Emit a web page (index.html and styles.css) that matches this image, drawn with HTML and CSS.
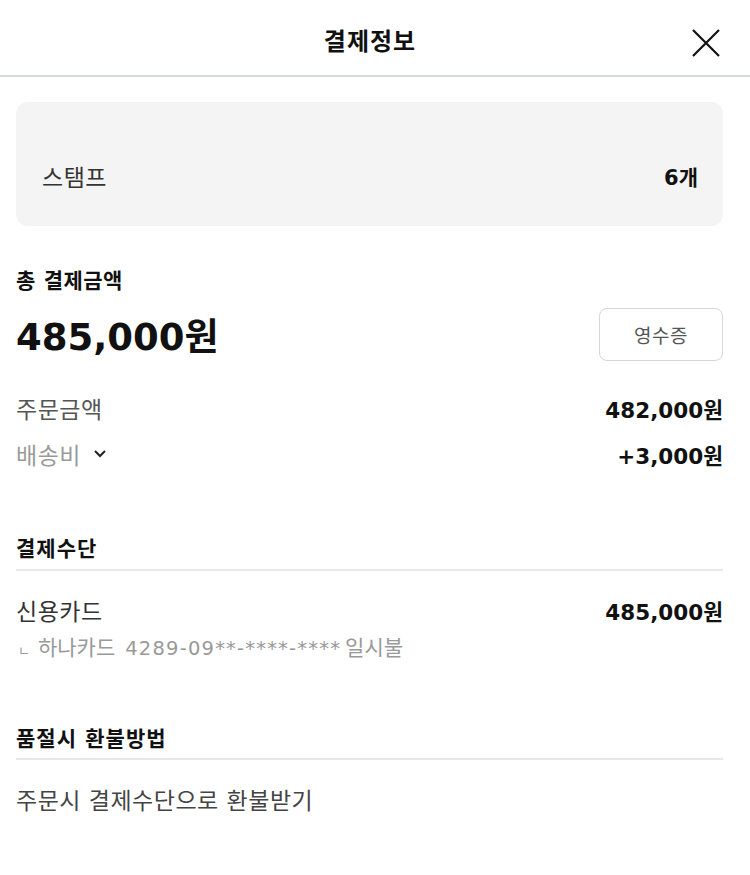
FILE: index.html
```html
<!DOCTYPE html>
<html lang="ko">
<head>
<meta charset="UTF-8" />
<meta name="viewport" content="width=device-width, initial-scale=1.0"/>
<title>결제정보</title>
<link rel="stylesheet" href="styles.css">
</head>
<body>
<header class="top-bar">
  <h1>결제정보</h1>
  <button class="close-btn" aria-label="닫기">
    <svg width="28" height="28" viewBox="0 0 28 28">
      <path d="M1 1 L27 27 M27 1 L1 27" stroke="#111" stroke-width="2.2" fill="none"/>
    </svg>
  </button>
</header>
<main>
  <div class="stamp-box">
    <span class="stamp-label">스탬프</span>
    <span class="stamp-count">6개</span>
  </div>

  <section class="total">
    <div class="section-title">총 결제금액</div>
    <div class="total-row">
      <div class="total-amount">485,000원</div>
      <button class="receipt-btn">영수증</button>
    </div>
    <div class="line-row first">
      <span class="label">주문금액</span>
      <span class="value">482,000원</span>
    </div>
    <div class="line-row">
      <span class="label muted">배송비
        <svg class="chevron" width="14" height="10" viewBox="0 0 14 10">
          <path d="M2 2 L7 7 L12 2" stroke="#222" stroke-width="2" fill="none"/>
        </svg>
      </span>
      <span class="value">+3,000원</span>
    </div>
  </section>

  <section class="block">
    <div class="block-title">결제수단</div>
    <div class="line-row">
      <span class="label dark">신용카드</span>
      <span class="value">485,000원</span>
    </div>
    <div class="card-info"><span class="corner">ㄴ</span>하나카드<span class="card-num">4289-09**-****-****</span>일시불</div>
  </section>

  <section class="block refund-block">
    <div class="block-title">품절시 환불방법</div>
    <div class="refund">주문시 결제수단으로 환불받기</div>
  </section>
</main>
</body>
</html>
```

FILE: styles.css
```css
body {
  margin: 0;
  font-family: "DejaVu Sans", "Noto Sans CJK KR", sans-serif;
  color: #111;
  background: #fff;
}

.top-bar {
  position: relative;
  height: 77px;
  box-sizing: border-box;
  padding-top: 4px;
  display: flex;
  align-items: center;
  justify-content: center;
  border-bottom: 2px solid #d5d8dc;
}

.top-bar h1 {
  margin: 0 10px 0 0;
  font-size: 24px;
  font-weight: bold;
  letter-spacing: 1px;
}

.close-btn {
  position: absolute;
  right: 30px;
  top: 29px;
  border: none;
  background: none;
  padding: 0;
  width: 28px;
  height: 28px;
  cursor: pointer;
}

main {
  padding: 25px 27px 0 16px;
}

.stamp-box {
  background: #f4f4f4;
  border-radius: 12px;
  height: 124px;
  box-sizing: border-box;
  padding: 61px 25px 0 26px;
  display: flex;
  justify-content: space-between;
  align-items: flex-start;
  font-size: 23px;
  line-height: 30px;
}

.stamp-label {
  color: #333;
  letter-spacing: 0.5px;
}

.stamp-count {
  font-weight: bold;
  font-size: 21px;
}

.total {
  padding-top: 43px;
}

.section-title {
  font-size: 21px;
  font-weight: bold;
  line-height: 24px;
  letter-spacing: 0.5px;
}

.total-row {
  display: flex;
  justify-content: space-between;
  align-items: flex-start;
  margin-top: 15px;
}

.total-amount {
  font-size: 37px;
  font-weight: bold;
  line-height: 44px;
  margin-top: 8px;
}

.receipt-btn {
  width: 124px;
  height: 53px;
  border: 1px solid #d6d6d6;
  border-radius: 8px;
  background: #fff;
  font-family: "Noto Sans CJK KR", sans-serif;
  font-size: 19px;
  letter-spacing: 0.5px;
  color: #555;
}

.line-row {
  display: flex;
  justify-content: space-between;
  align-items: center;
  height: 46px;
  font-size: 23px;
}

.line-row.first {
  margin-top: 24px;
}

.label {
  color: #555;
  display: flex;
  align-items: center;
  letter-spacing: 0.5px;
}

.label.muted {
  color: #9a9a9a;
}

.label.dark {
  color: #333;
}

.chevron {
  margin-left: 12px;
}

.value {
  font-weight: bold;
  font-size: 21.5px;
}

.block {
  margin-top: 59px;
}

.block-title {
  font-size: 21px;
  font-weight: bold;
  line-height: 26px;
  letter-spacing: 1px;
  padding-bottom: 7px;
  border-bottom: 2px solid #e8e8e8;
  margin-bottom: 16px;
}

.card-info {
  color: #999;
  font-size: 21px;
  line-height: 26px;
  margin-top: 2px;
}

.card-num {
  font-size: 19.5px;
  letter-spacing: 1.2px;
  margin: 0 4px 0 10px;
}

.corner {
  font-size: 13px;
  margin: 0 8px 0 2px;
}

.refund-block {
  margin-top: 62px;
}

.refund-block .block-title {
  padding-bottom: 6px;
  margin-bottom: 26px;
}

.refund {
  color: #444;
  font-size: 23px;
  line-height: 30px;
  letter-spacing: 0.5px;
}
```
